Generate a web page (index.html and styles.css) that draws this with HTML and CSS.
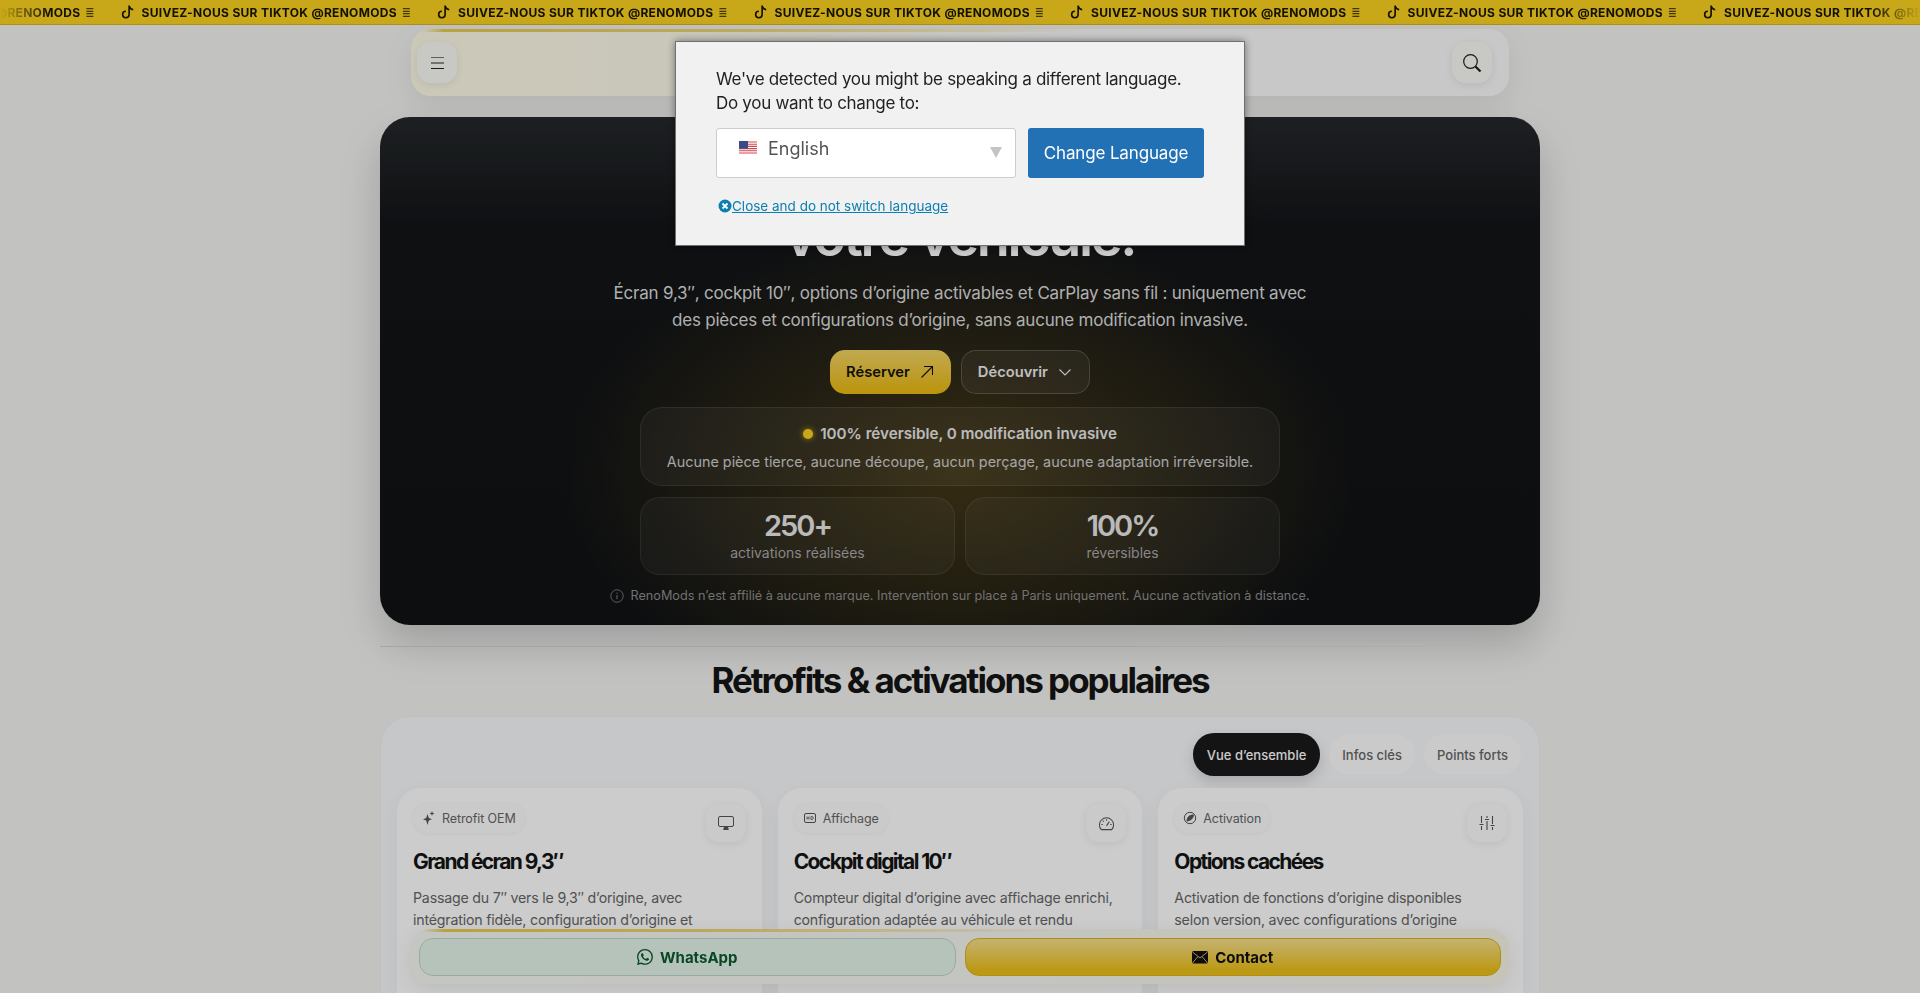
FILE: index.html
```html
<!DOCTYPE html>
<html lang="fr">
<head>
    <meta charset="UTF-8">
    <meta name="viewport" content="width=device-width, initial-scale=1.0">
    <title>RenoMods</title>
    <link rel="stylesheet" href="styles.css">
</head>
<body>
    <svg class="defs" width="0" height="0" aria-hidden="true">
        <symbol id="tiktok" viewBox="0 0 16 16"><path fill="currentColor" d="M9 0h1.98c.144.715.54 1.617 1.235 2.512C12.895 3.389 13.797 4 15 4v2c-1.753 0-3.07-.814-4-1.829V11a5 5 0 1 1-5-5v2a3 3 0 1 0 3 3z"/></symbol>
    </svg>

    <div class="ticker">
        <div class="ticker-mask">
            <div class="ticker-track">
                <div class="ticker-item"><svg class="tt"><use href="#tiktok"/></svg><span>SUIVEZ-NOUS SUR TIKTOK @RENOMODS</span><i>≣</i></div>
                <div class="ticker-item"><svg class="tt"><use href="#tiktok"/></svg><span>SUIVEZ-NOUS SUR TIKTOK @RENOMODS</span><i>≣</i></div>
                <div class="ticker-item"><svg class="tt"><use href="#tiktok"/></svg><span>SUIVEZ-NOUS SUR TIKTOK @RENOMODS</span><i>≣</i></div>
                <div class="ticker-item"><svg class="tt"><use href="#tiktok"/></svg><span>SUIVEZ-NOUS SUR TIKTOK @RENOMODS</span><i>≣</i></div>
                <div class="ticker-item"><svg class="tt"><use href="#tiktok"/></svg><span>SUIVEZ-NOUS SUR TIKTOK @RENOMODS</span><i>≣</i></div>
                <div class="ticker-item"><svg class="tt"><use href="#tiktok"/></svg><span>SUIVEZ-NOUS SUR TIKTOK @RENOMODS</span><i>≣</i></div>
                <div class="ticker-item"><svg class="tt"><use href="#tiktok"/></svg><span>SUIVEZ-NOUS SUR TIKTOK @RENOMODS</span><i>≣</i></div>
            </div>
        </div>
    </div>

    <header class="topbar">
        <button class="round-btn" aria-label="Menu">
            <svg width="13" height="12" viewBox="0 0 13 12" fill="none" stroke="#222"><path d="M0 .5h13" stroke="#777"/><path d="M0 6h13M0 11.5h13"/></svg>
        </button>
        <button class="round-btn" aria-label="Rechercher">
            <svg width="20" height="20" viewBox="0 0 20 20" fill="none" stroke="#1c1c1c" stroke-width="1.2"><circle cx="8.5" cy="8.5" r="6.8"/><path d="M13.5 13.5 18.5 18.5" stroke-width="2.2"/></svg>
        </button>
    </header>

    <section class="hero">
        <h1>votre véhicule.</h1>
        <p class="hero-lead">Écran 9,3″, cockpit 10″, options d’origine activables et CarPlay sans fil : uniquement avec<br>des pièces et configurations d’origine, sans aucune modification invasive.</p>
        <div class="hero-actions">
            <a class="btn btn-gold" href="#">Réserver
                <svg width="16" height="16" viewBox="0 0 16 16" fill="none" stroke="currentColor" stroke-width="1.1"><path d="M2.5 13.5 13.5 2.5M5 2.5h8.5V11"/></svg>
            </a>
            <a class="btn btn-dark" href="#">Découvrir
                <svg width="16" height="16" viewBox="0 0 16 16" fill="none" stroke="currentColor" stroke-width="1.1"><path d="M2.5 5.5 8 11l5.5-5.5"/></svg>
            </a>
        </div>
        <div class="hero-box">
            <div class="hero-box-title"><span class="dot"></span>100% réversible, 0 modification invasive</div>
            <div class="hero-box-text">Aucune pièce tierce, aucune découpe, aucun perçage, aucune adaptation irréversible.</div>
        </div>
        <div class="stats">
            <div class="stat"><strong>250+</strong><span>activations réalisées</span></div>
            <div class="stat"><strong>100%</strong><span>réversibles</span></div>
        </div>
        <p class="hero-note">
            <svg width="14" height="14" viewBox="0 0 14 14" fill="none" stroke="currentColor"><circle cx="7" cy="7" r="6.2" stroke-width=".8"/><path d="M7 6v4.2M7 3.6v1.1" stroke-width=".9"/></svg>
            RenoMods n’est affilié à aucune marque. Intervention sur place à Paris uniquement. Aucune activation à distance.
        </p>
    </section>

    <div class="divider"></div>
    <h2 class="section-title">Rétrofits &amp; activations populaires</h2>

    <section class="panel">
        <div class="tabs">
            <button class="tab active">Vue d’ensemble</button>
            <button class="tab">Infos clés</button>
            <button class="tab">Points forts</button>
        </div>
        <div class="cards">
            <article class="card">
                <div class="card-top">
                    <span class="badge">
                        <svg width="14" height="14" viewBox="0 0 14 14" fill="#555"><path d="M5.5 3 6.8 7 10 8.3 6.8 9.500 5.500 14 4.200 9.500 1 8.300 4.200 7zM10 0l.6 1.800L12.500 2.500l-1.900.7L10 5l-.6-1.800L7.500 2.500l1.900-.7z"/></svg>
                        Retrofit OEM
                    </span>
                    <span class="card-icon">
                        <svg width="16" height="16" viewBox="0 0 16 16" fill="none" stroke="#555"><rect x=".5" y="1.5" width="15" height="10" rx="1.5"/><path d="M6.500 12h3l.8 2.500H5.700z" fill="#555"/></svg>
                    </span>
                </div>
                <h3>Grand écran 9,3″</h3>
                <p>Passage du 7″ vers le 9,3″ d’origine, avec intégration fidèle, configuration d’origine et</p>
                <div class="card-line"></div>
            </article>
            <article class="card">
                <div class="card-top">
                    <span class="badge">
                        <svg width="14" height="14" viewBox="0 0 14 14" fill="none" stroke="#555"><rect x="1.5" y="2.5" width="11" height="9" rx="1.5"/><path d="M4 5.500v3M6 5.500v3M4 7h2M8 5.500v3h1.200c1.400 0 1.400-3 0-3z" stroke-width=".8"/></svg>
                        Affichage
                    </span>
                    <span class="card-icon">
                        <svg width="17" height="17" viewBox="0 0 18 18" fill="none" stroke="#555" stroke-width="1.1"><path d="M3.500 15.500A7.500 7.500 0 1 1 14.500 15.500z"/><path d="M9 11.500 12 7M3.500 10H5M13 10h1.500M9 4.500v1.500M5 6l1 1"/></svg>
                    </span>
                </div>
                <h3>Cockpit digital 10″</h3>
                <p>Compteur digital d’origine avec affichage enrichi, configuration adaptée au véhicule et rendu</p>
                <div class="card-line"></div>
            </article>
            <article class="card">
                <div class="card-top">
                    <span class="badge">
                        <svg width="14" height="14" viewBox="0 0 14 14" fill="none" stroke="#555"><circle cx="7" cy="7" r="5.7"/><path d="M4 10c0-4 2.500-6 6.500-6-.5 3.500-2.500 5.500-6.500 6z" fill="#555"/></svg>
                        Activation
                    </span>
                    <span class="card-icon">
                        <svg width="16" height="16" viewBox="0 0 16 16" fill="none" stroke="#555" stroke-width="1.100"><path d="M2.500 1v7M2.500 11v4M8 1v2M8 6v9M13.500 1v8M13.500 12v3M.5 9.500h4M6 4.500h4M11.500 10.500h4"/></svg>
                    </span>
                </div>
                <h3>Options cachées</h3>
                <p>Activation de fonctions d’origine disponibles<br>selon version, avec configurations d’origine</p>
                <div class="card-line"></div>
            </article>
        </div>
    </section>

    <div class="cta-bar">
        <a class="cta cta-whatsapp" href="#">
            <svg width="16" height="16" viewBox="0 0 16 16" fill="currentColor"><path d="M13.601 2.326A7.850 7.850 0 0 0 7.994 0C3.627 0 .068 3.558.064 7.926c0 1.399.366 2.760 1.057 3.965L0 16l4.204-1.102a7.900 7.900 0 0 0 3.790.965h.004c4.368 0 7.926-3.558 7.930-7.930A7.900 7.900 0 0 0 13.600 2.326zM7.994 14.521a6.600 6.600 0 0 1-3.356-.920l-.240-.144-2.494.654.666-2.433-.156-.251a6.560 6.560 0 0 1-1.007-3.505c0-3.626 2.957-6.584 6.591-6.584a6.560 6.560 0 0 1 4.660 1.931 6.560 6.560 0 0 1 1.928 4.660c-.004 3.639-2.961 6.592-6.592 6.592m3.615-4.934c-.197-.099-1.170-.578-1.353-.646-.182-.065-.315-.099-.445.099-.133.197-.513.646-.627.775-.114.133-.232.148-.430.050-.197-.100-.836-.308-1.592-.985-.590-.525-.985-1.175-1.103-1.372-.114-.198-.011-.304.088-.403.087-.088.197-.232.296-.346.100-.114.133-.198.198-.330.065-.134.034-.248-.015-.347-.050-.099-.445-1.076-.612-1.470-.160-.389-.323-.335-.445-.340-.114-.007-.247-.007-.380-.007a.730.730 0 0 0-.529.247c-.182.198-.691.677-.691 1.654s.710 1.916.810 2.049c.098.133 1.394 2.132 3.383 2.992.470.205.840.326 1.129.418.475.152.904.129 1.246.080.380-.058 1.171-.480 1.338-.943.164-.464.164-.860.114-.943-.049-.084-.182-.133-.380-.232"/></svg>
            WhatsApp
        </a>
        <a class="cta cta-contact" href="#">
            <svg width="16" height="13" viewBox="0 0 16 13"><rect width="16" height="12.5" rx="1.5" fill="#111"/><path d="M.5 1 8 7l7.500-6M.5 12 6 5.500M15.500 12 10 5.500" fill="none" stroke="#e0c860" stroke-width=".9"/></svg>
            Contact
        </a>
    </div>

    <!-- language popup -->
    <div class="overlay">
        <div class="lang-modal">
            <p>We've detected you might be speaking a different language.<br>Do you want to change to:</p>
            <div class="lang-row">
                <div class="lang-select">
                    <svg width="18" height="14" viewBox="0 0 18 14"><rect width="18" height="14" fill="#fff"/><path d="M0 1h18M0 3.200h18M0 5.400h18M0 7.600h18M0 9.800h18M0 12h18" stroke="#d0474f" stroke-width="1.100"/><rect width="9" height="7.600" fill="#3a4a86"/></svg>
                    <span>English</span>
                    <i class="lang-arrow"></i>
                </div>
                <button class="lang-btn">Change Language</button>
            </div>
            <a class="lang-close" href="#">
                <svg width="14" height="14" viewBox="0 0 14 14"><circle cx="7" cy="7" r="6.500" fill="#0c7fb0"/><path d="M4.500 4.500l5 5M9.500 4.500l-5 5" stroke="#fff" stroke-width="1.800"/></svg>
                <span>Close and do not switch language</span>
            </a>
        </div>
    </div>
</body>
</html>
```

FILE: styles.css
```css
/* Variables */
:root {
    --bg: #f3f4f2;
    --gold: #fbd21f;
    --ink: #141414;
    --muted: #666;
    --font: 'Inter', 'Liberation Sans', sans-serif;
}

* {
    margin: 0;
    padding: 0;
    box-sizing: border-box;
    font-family: var(--font);
}

html, body {
    height: 100%;
    overflow: hidden;
}

body {
    background: var(--bg);
    color: var(--ink);
    display: flex;
    flex-direction: column;
    align-items: center;
}

a {
    text-decoration: none;
}

button {
    border: none;
    background: none;
}

.defs {
    position: absolute;
}

/* Ticker */
.ticker {
    width: 100%;
    height: 25px;
    flex-shrink: 0;
    background: var(--gold);
    border-bottom: 1px solid #d8b41e;
}

.ticker-mask {
    overflow: hidden;
    -webkit-mask-image: linear-gradient(90deg, transparent, #000 50px, #000 calc(100% - 50px), transparent);
    mask-image: linear-gradient(90deg, transparent, #000 50px, #000 calc(100% - 50px), transparent);
}

.ticker-track {
    display: flex;
    margin-left: -196px;
}

.ticker-item {
    flex: 0 0 316.5px;
    height: 24px;
    display: flex;
    align-items: center;
    color: #181400;
    font-size: 12px;
    font-weight: 700;
    letter-spacing: .3px;
    white-space: nowrap;
}

.ticker-item .tt {
    width: 13px;
    height: 14px;
    margin-right: 8px;
}

.ticker-item i {
    font-family: 'DejaVu Sans', sans-serif;
    font-style: normal;
    font-size: 11px;
    margin-left: 5px;
    opacity: .75;
}

/* Top bar */
.topbar {
    width: 1098px;
    height: 67px;
    flex-shrink: 0;
    margin-top: 4px;
    padding: 13px 17px 13px 6px;
    display: flex;
    justify-content: space-between;
    background:
        linear-gradient(90deg, transparent 1%, #e8ca50 3%, #ecd47a 30%, transparent 62%) top / 100% 3px no-repeat,
        linear-gradient(90deg, #fffbe8, #fbf8ea 35%, #fafafa 60%);
    border-radius: 20px;
    box-shadow: 0 10px 30px rgba(0,0,0,.08);
}

.round-btn {
    width: 40px;
    height: 41px;
    display: flex;
    align-items: center;
    justify-content: center;
    background: #fbfbf7;
    border-radius: 14px;
    box-shadow: 0 2px 8px rgba(0,0,0,.08);
}

/* Hero */
.hero {
    width: 1160px;
    height: 508px;
    flex-shrink: 0;
    margin-top: 21px;
    display: flex;
    flex-direction: column;
    align-items: center;
    color: #e9e9e9;
    border-radius: 30px;
    background:
        radial-gradient(ellipse 400px 250px at 50% 70%, rgba(135,105,25,.42), transparent),
        linear-gradient(180deg, #25282b 0, #121417 22%, #101214 100%);
    box-shadow: 0 20px 40px rgba(0,0,0,.18);
}

.hero h1 {
    margin-top: 88px;
    height: 60px;
    color: #fff;
    font-size: 54px;
    line-height: 64px;
    font-weight: 600;
    letter-spacing: -2.4px;
}

.hero-lead {
    margin-top: 15px;
    color: #dcdcdc;
    font-size: 17px;
    line-height: 27px;
    text-align: center;
    letter-spacing: -.22px;
}

.hero-actions {
    display: flex;
    gap: 10px;
    margin-top: 16px;
}

.btn {
    height: 44px;
    display: flex;
    align-items: center;
    gap: 9px;
    padding: 0 16px;
    border-radius: 15px;
    font-size: 14.7px;
    font-weight: 600;
}

.btn-gold {
    color: #15110a;
    background: linear-gradient(180deg, #f1d466, #ebb90f);
}

.btn-dark {
    color: #eee;
    background: rgba(255,255,255,.06);
    border: 1px solid rgba(255,255,255,.18);
}

.hero-box {
    width: 640px;
    height: 79px;
    margin-top: 13px;
    display: flex;
    flex-direction: column;
    align-items: center;
    padding-top: 16px;
    gap: 8px;
    background: rgba(255,255,255,.05);
    border: 1px solid rgba(255,255,255,.09);
    border-radius: 22px;
}

.hero-box-title {
    display: flex;
    align-items: center;
    gap: 7px;
    font-size: 15.2px;
    font-weight: 600;
    line-height: 20px;
}

.dot {
    width: 10px;
    height: 10px;
    border-radius: 50%;
    background: var(--gold);
    box-shadow: 0 0 6px rgba(251,210,31,.7);
}

.hero-box-text {
    color: #cfcfcf;
    font-size: 14.4px;
    line-height: 20px;
}

.stats {
    width: 640px;
    display: grid;
    grid-template-columns: 1fr 1fr;
    gap: 10px;
    margin-top: 11px;
}

.stat {
    height: 78px;
    display: flex;
    flex-direction: column;
    align-items: center;
    padding-top: 10px;
    background: rgba(255,255,255,.045);
    border: 1px solid rgba(255,255,255,.08);
    border-radius: 20px;
}

.stat strong {
    font-size: 29px;
    line-height: 36px;
    font-weight: 600;
    letter-spacing: -2px;
}

.stat span {
    margin-top: -1px;
    color: #a9a9a9;
    font-size: 14px;
    line-height: 20px;
}

.hero-note {
    margin-top: 12px;
    display: flex;
    align-items: center;
    gap: 6px;
    color: #8f8f8f;
    font-size: 12.7px;
    line-height: 18px;
}

/* Section */
.divider {
    width: 1160px;
    height: 1px;
    flex-shrink: 0;
    margin-top: 21px;
    background: linear-gradient(90deg, #cfcfcf 60%, transparent);
}

.section-title {
    margin-top: 10px;
    height: 46px;
    flex-shrink: 0;
    font-size: 35px;
    line-height: 46px;
    font-weight: 700;
    letter-spacing: -2px;
}

.panel {
    width: 1160px;
    flex-shrink: 0;
    margin-top: 13px;
    padding: 16px 16px 0;
    background: #f8f9fb;
    border: 1px solid #f0f0f0;
    border-radius: 30px;
}

.tabs {
    display: flex;
    justify-content: flex-end;
    align-items: center;
    gap: 9px;
    padding-right: 2px;
}

.tab {
    height: 41px;
    padding: 0 13px;
    color: #666;
    background: #fdfdfd;
    font-size: 13px;
    font-weight: 500;
    border-radius: 21px;
}

.tab.active {
    height: 43px;
    padding: 0 14px;
    color: #fff;
    background: #1a1a1a;
    box-shadow: 0 6px 14px rgba(0,0,0,.15);
}

.cards {
    display: grid;
    grid-template-columns: repeat(3, 1fr);
    gap: 16px;
    margin-top: 12px;
}

.card {
    height: 230px;
    padding: 15px 16px;
    background: #fff;
    border-radius: 24px;
    box-shadow: 0 6px 20px rgba(0,0,0,.05);
}

.card-top {
    height: 39px;
    display: flex;
    justify-content: space-between;
    align-items: flex-start;
}

.badge {
    height: 30px;
    display: inline-flex;
    align-items: center;
    gap: 6px;
    padding: 0 9px;
    color: #666;
    background: #fdfdfd;
    font-size: 12.5px;
    letter-spacing: -.1px;
    border-radius: 15px;
    box-shadow: 0 1px 4px rgba(0,0,0,.05);
}

.card-icon {
    width: 40px;
    height: 38px;
    margin: 1px 0 0;
    display: flex;
    align-items: center;
    justify-content: center;
    background: #fdfdfd;
    border-radius: 13px;
    box-shadow: 0 2px 8px rgba(0,0,0,.07);
}

.card h3 {
    margin-top: 5px;
    font-size: 21px;
    line-height: 30px;
    font-weight: 700;
    letter-spacing: -1.6px;
}

.card p {
    margin-top: 10px;
    color: #666;
    font-size: 14.2px;
    letter-spacing: -.2px;
    line-height: 22px;
    height: 66px;
}

.card-line {
    margin-top: 22px;
    height: 1px;
    background: #e4e4e4;
}

/* Bottom bar */
.cta-bar {
    position: fixed;
    left: 411px;
    bottom: 9px;
    width: 1098px;
    height: 55px;
    display: grid;
    grid-template-columns: 1fr 1fr;
    gap: 9px;
    padding: 9px 8px 8px;
    background:
        linear-gradient(90deg, transparent 1%, #e8ca50 3%, #ecd47a 30%, transparent 60%) top / 100% 3px no-repeat,
        linear-gradient(90deg, #f5f8f3, #f6f7f1 50%, #f8f6e6);
    border-radius: 18px;
    box-shadow: 0 6px 20px rgba(0,0,0,.08);
}

.cta {
    display: flex;
    align-items: center;
    justify-content: center;
    gap: 7px;
    font-size: 15px;
    font-weight: 700;
    border-radius: 14px;
}

.cta-whatsapp {
    color: #0b5a2c;
    background: #e4f4ea;
    border: 1px solid #bdd8c8;
}

.cta-contact {
    color: #111;
    background: linear-gradient(180deg, #f5e08e, #ecc01b 85%);
    border: 1px solid #dcb317;
}

/* Language popup */
.overlay {
    position: fixed;
    inset: 0;
    background: rgba(0,0,0,.2);
}

.lang-modal {
    position: absolute;
    top: 41px;
    left: 675px;
    width: 570px;
    height: 205px;
    padding: 25px 40px;
    background: #f0f1f0;
    border: 1px solid #6d7074;
    box-shadow: 0 0 8px rgba(0,0,0,.45);
}

.lang-modal p {
    color: #222;
    font-size: 17px;
    letter-spacing: -.3px;
    line-height: 24px;
}

.lang-row {
    display: flex;
    gap: 12px;
    margin-top: 13px;
}

.lang-select {
    position: relative;
    width: 300px;
    height: 50px;
    display: flex;
    align-items: flex-start;
    gap: 11px;
    padding: 10px 22px;
    background: #fff;
    border: 1px solid #ccc;
    border-radius: 3px;
}

.lang-select svg {
    margin-top: 2px;
}

.lang-select span {
    color: #555;
    font-size: 18px;
    line-height: 20px;
}

.lang-arrow {
    position: absolute;
    right: 13px;
    top: 18px;
    border-left: 6px solid transparent;
    border-right: 6px solid transparent;
    border-top: 11px solid #c4c4c4;
}

.lang-btn {
    width: 176px;
    height: 50px;
    color: #fff;
    background: #2271b5;
    font-size: 17px;
    letter-spacing: -.15px;
    border-radius: 3px;
}

.lang-close {
    display: flex;
    align-items: center;
    margin-top: 18px;
    margin-left: 2px;
    color: #0c7fb0;
    font-size: 13.5px;
    line-height: 20px;
}

.lang-close span {
    text-decoration: underline;
}
```
